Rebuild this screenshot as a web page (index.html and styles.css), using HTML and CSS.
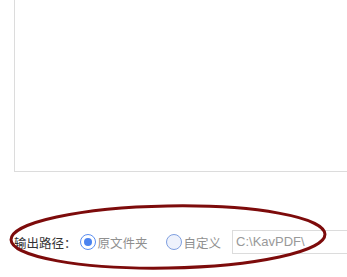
FILE: index.html
```html
<!DOCTYPE html>
<html lang="zh-CN">
<head>
<meta charset="utf-8">
<link rel="stylesheet" href="styles.css">
</head>
<body>
<div class="page">
  <div class="panel"></div>
  <div class="row">
    <span class="label">输出路径：</span>
    <label class="opt">
      <span class="radio checked"><span class="dot"></span></span>
      <span class="opt-text">原文件夹</span>
    </label>
    <label class="opt opt2">
      <span class="radio"></span>
      <span class="opt-text">自定义</span>
    </label>
    <div class="path">C:\KavPDF\</div>
  </div>
  <svg class="mark" width="347" height="277" viewBox="0 0 347 277">
    <ellipse cx="168" cy="237" rx="157" ry="31" fill="none" stroke="#7d0b0b" stroke-width="3" transform="rotate(-1 168 237)"/>
  </svg>
</div>
</body>
</html>
```
FILE: styles.css
```css
html, body {
  margin: 0;
  padding: 0;
  background: #fff;
  overflow: hidden;
}
.page {
  position: relative;
  width: 347px;
  height: 277px;
  overflow: hidden;
  font-family: "Noto Sans CJK SC", "Noto Sans", sans-serif;
}
.panel {
  margin-left: 14px;
  height: 171px;
  border-left: 1px solid #dcdcdc;
  border-bottom: 1px solid #dcdcdc;
}
.row {
  display: flex;
  align-items: center;
  margin-top: 58px;
  padding-left: 14px;
  height: 24px;
  font-size: 12.5px;
  white-space: nowrap;
}
.label {
  color: #333;
}
.opt {
  display: flex;
  align-items: center;
  margin-left: 3px;
}
.opt2 {
  margin-left: 18px;
}
.radio {
  box-sizing: border-box;
  width: 16px;
  height: 16px;
  border-radius: 50%;
  border: 1px solid #7f9fe0;
  background: #eef2fc;
  display: flex;
  align-items: center;
  justify-content: center;
}
.radio.checked {
  background: #fff;
  border: 1.5px solid #5b8ef0;
}
.dot {
  width: 8px;
  height: 8px;
  border-radius: 50%;
  background: #4a83f0;
}
.opt-text {
  margin-left: 2px;
  color: #909090;
}
.path {
  margin-left: 11px;
  box-sizing: border-box;
  height: 24px;
  width: 130px;
  border: 1px solid #dcdcdc;
  border-right: none;
  padding-left: 3px;
  color: #999;
  font-family: "Liberation Sans", sans-serif;
  font-size: 13px;
  line-height: 22px;
}
.mark {
  position: absolute;
  left: 0;
  top: 0;
}
```
